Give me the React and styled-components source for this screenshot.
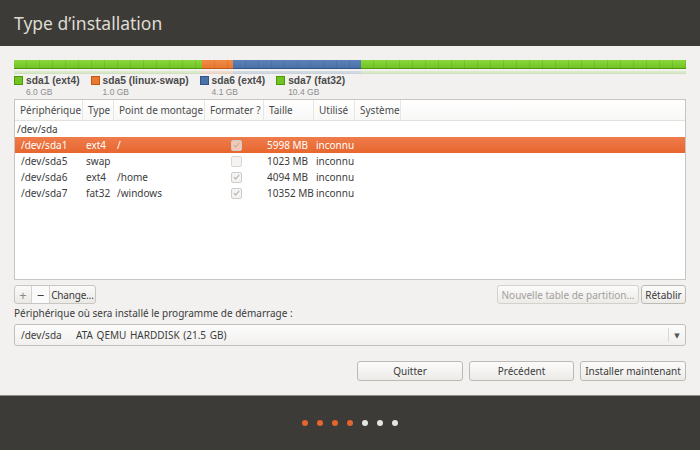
import styled, { createGlobalStyle } from 'styled-components';

const Global = createGlobalStyle`
  html, body { margin: 0; padding: 0; }
  body {
    font-family: 'Noto Sans', 'DejaVu Sans', sans-serif;
    background: #f2f1f0;
    color: #3c3c3c;
  }
`

const Page = styled.div`
  width: 700px;
  height: 450px;
  display: flex;
  flex-direction: column;
  overflow: hidden;
`

const Header = styled.div`
  height: 46px;
  background: #3c3b37;
  color: #dfdbd2;
  font-size: 17.5px;
  display: flex;
  align-items: center;
  padding-left: 14px;
  flex-shrink: 0;
`

const Main = styled.div`
  flex: 1;
  padding: 14px 14px 0;
  display: flex;
  flex-direction: column;
`

const Bar = styled.div`
  display: flex;
  height: 9px;
`

const Reflection = styled(Bar)`
  height: 3px;
  margin-top: 2px;
  opacity: 0.2;
`

const Segment = styled.div`
  flex: ${p => p.$size};
  background:
    repeating-linear-gradient(90deg, transparent 0 12px, rgba(0,0,0,0.08) 12px 13px),
    linear-gradient(${p => p.$light}, ${p => p.$color});
  border-bottom: 1px solid ${p => p.$dark};
  box-sizing: border-box;
`

const Legend = styled.div`
  display: flex;
  gap: 11px;
  margin-top: 1px;
  font-family: 'Liberation Sans', Arial, sans-serif;
`

const LegendItem = styled.div`
  display: grid;
  grid-template-columns: 12px auto;
  align-items: center;
`

const Swatch = styled.div`
  width: 9px;
  height: 9px;
  background: ${p => p.$color};
  border: 1px solid ${p => p.$dark};
  box-sizing: border-box;
`

const LegendName = styled.div`
  font-size: 10.25px;
  font-weight: bold;
  color: #4a4a4a;
  line-height: 11px;
`

const LegendSize = styled.div`
  grid-column: 2;
  margin-top: 1px;
  font-size: 8.5px;
  color: #8c8c8c;
  line-height: 10px;
`

const Table = styled.div`
  margin-top: 2px;
  height: 181px;
  background: #fff;
  border: 1px solid #c8c5c1;
  box-sizing: border-box;
  display: flex;
  flex-direction: column;
`

const Row = styled.div`
  display: grid;
  grid-template-columns: 68px 31px 91px 59px 50px 41px 46px 1fr;
  height: ${p => (p.$head ? 20 : 16)}px;
  flex-shrink: 0;
  align-items: center;
  font-size: 10px;
  color: ${p => (p.$selected ? '#fff' : '#3c3c3c')};
  background: ${p => (p.$selected ? 'linear-gradient(#ee7c4b, #e8662e)' : 'transparent')};
`

const HeadRow = styled(Row)`
  background: linear-gradient(#ffffff, #f8f8f7);
  border-bottom: 1px solid #e3e1de;
  color: #4a4a4a;
`

const HeadCell = styled.div`
  padding-left: 5px;
  height: 100%;
  display: flex;
  align-items: center;
  border-right: 1px solid #e8e6e3;
  white-space: nowrap;
  overflow: hidden;
  &:last-child { border-right: none; }
`

const Cell = styled.div`
  padding-left: ${p => p.$indent ?? 3}px;
  white-space: nowrap;
  overflow: hidden;
  ${p => p.$center && 'display: flex; justify-content: center;'}
`

const Check = styled.div`
  width: 9px;
  height: 9px;
  border: 1px solid ${p => (p.$on ? '#cfcdca' : '#d8d6d3')};
  border-radius: 2px;
  background: ${p => (p.$sel ? '#f4c7b2' : '#f4f3f2')};
  display: flex;
  align-items: center;
  justify-content: center;
`

const Toolbar = styled.div`
  display: flex;
  margin-top: 5px;
  height: 19px;
`

const Group = styled.div`
  display: flex;
  border: 1px solid #c9c5c0;
  border-radius: 3px;
  overflow: hidden;
  background: linear-gradient(#fafaf9, #ebe9e6);
`

const GroupButton = styled.div`
  display: flex;
  align-items: center;
  justify-content: center;
  width: ${p => p.$w}px;
  font-size: ${p => p.$big ? 13 : 10}px;
  color: ${p => p.$dim ? '#8a8a8a' : '#3c3c3c'};
  border-right: 1px solid #d6d3cf;
  background: ${p => p.$white ? '#fafafa' : 'transparent'};
  letter-spacing: ${p => p.$tight ? '-0.2px' : '0'};
  &:last-child { border-right: none; }
`

const Spacer = styled.div`flex: 1;`

const Button = styled.div`
  height: ${p => p.$h || 19}px;
  width: ${p => (p.$w ? p.$w + 'px' : 'auto')};
  margin-left: ${p => p.$ml || 0}px;
  box-sizing: border-box;
  display: flex;
  align-items: center;
  justify-content: center;
  border: 1px solid ${p => (p.$disabled ? '#d4d1cd' : '#bdb9b4')};
  border-radius: 3px;
  background: linear-gradient(#fbfbfa, #ecebe8);
  font-size: 10px;
  color: ${p => (p.$disabled ? '#a3a09c' : '#3c3c3c')};
  white-space: nowrap;
`

const Label = styled.div`
  font-size: 10px;
  color: #3c3c3c;
  margin-top: 2px;
  height: 14px;
  line-height: 14px;
`

const Combo = styled.div`
  margin-top: 4px;
  height: 22px;
  border: 1px solid #c3c0bb;
  border-radius: 3px;
  background: linear-gradient(#fcfcfc, #f1f0ee);
  display: flex;
  align-items: center;
  font-size: 10px;
  box-sizing: border-box;
`

const ComboText = styled.div`
  flex: 1;
  padding-left: 6px;
  word-spacing: 1px;
`

const ComboArrow = styled.div`
  width: 16px;
  height: 14px;
  border-left: 1px solid #dad8d4;
  display: flex;
  align-items: center;
  justify-content: center;
  font-size: 7px;
  color: #555;
`

const Actions = styled.div`
  display: flex;
  justify-content: flex-end;
  gap: 6px;
  margin-top: 15px;
`

const Footer = styled.div`
  height: 54px;
  flex-shrink: 0;
  background: #3c3b37;
  border-top: 1px solid #8f8b85;
  display: flex;
  align-items: center;
  justify-content: center;
  gap: 9px;
`

const Dot = styled.div`
  width: 6px;
  height: 6px;
  border-radius: 50%;
  background: ${p => (p.$done ? '#e5652e' : '#e6e5e3')};
`

const parts = [
  { name: 'sda1 (ext4)', size: '6.0 GB', gb: 6.0, color: '#72c425', light: '#8ad83d', dark: '#4e9a06' },
  { name: 'sda5 (linux-swap)', size: '1.0 GB', gb: 1.0, color: '#e9782f', light: '#f08a47', dark: '#c25a16' },
  { name: 'sda6 (ext4)', size: '4.1 GB', gb: 4.1, color: '#4a72a8', light: '#5b82b8', dark: '#2f5689' },
  { name: 'sda7 (fat32)', size: '10.4 GB', gb: 10.4, color: '#72c425', light: '#8ad83d', dark: '#4e9a06' },
]

const rows = [
  { dev: '/dev/sda1', type: 'ext4', mount: '/', fmt: true, size: '5998 MB', selected: true },
  { dev: '/dev/sda5', type: 'swap', mount: '', fmt: false, size: '1023 MB' },
  { dev: '/dev/sda6', type: 'ext4', mount: '/home', fmt: true, size: '4094 MB' },
  { dev: '/dev/sda7', type: 'fat32', mount: '/windows', fmt: true, size: '10352 MB' },
]

const Tick = ({ color }) => (
  <svg width="7" height="6" viewBox="0 0 7 6">
    <path d="M0.8 3.2 L2.7 5 L6.2 0.8" fill="none" stroke={color} strokeWidth="1.1" />
  </svg>
)

export default function App() {
  return (
    <Page>
      <Global />
      <Header>Type d’installation</Header>
      <Main>
        <Bar>
          {parts.map(p => (
            <Segment key={p.name} $size={p.gb} $color={p.color} $light={p.light} $dark={p.dark} />
          ))}
        </Bar>
        <Reflection>
          {parts.map(p => (
            <Segment key={p.name} $size={p.gb} $color={p.color} $light={p.light} $dark={p.dark} />
          ))}
        </Reflection>
        <Legend>
          {parts.map(p => (
            <LegendItem key={p.name}>
              <Swatch $color={p.color} $dark={p.dark} />
              <LegendName>{p.name}</LegendName>
              <LegendSize>{p.size}</LegendSize>
            </LegendItem>
          ))}
        </Legend>
        <Table>
          <HeadRow $head>
            <HeadCell>Périphérique</HeadCell>
            <HeadCell>Type</HeadCell>
            <HeadCell>Point de montage</HeadCell>
            <HeadCell>Formater ?</HeadCell>
            <HeadCell>Taille</HeadCell>
            <HeadCell>Utilisé</HeadCell>
            <HeadCell>Système</HeadCell>
            <HeadCell />
          </HeadRow>
          <Row>
            <Cell $indent={2}>/dev/sda</Cell>
          </Row>
          {rows.map(r => (
            <Row key={r.dev} $selected={r.selected}>
              <Cell $indent={6}>{r.dev}</Cell>
              <Cell>{r.type}</Cell>
              <Cell>{r.mount}</Cell>
              <Cell $center>
                <Check $on={r.fmt} $sel={r.selected}>
                  {r.fmt && <Tick color={r.selected ? '#b9b4b0' : '#b3b0ac'} />}
                </Check>
              </Cell>
              <Cell>{r.size}</Cell>
              <Cell $indent={2}>inconnu</Cell>
              <Cell />
              <Cell />
            </Row>
          ))}
        </Table>
        <Toolbar>
          <Group>
            <GroupButton $w={16} $big $dim>+</GroupButton>
            <GroupButton $w={17} $big $white>−</GroupButton>
            <GroupButton $w={45} $tight>Change…</GroupButton>
          </Group>
          <Spacer />
          <Button $disabled $w={142}>Nouvelle table de partition…</Button>
          <Button $w={45} $ml={2}>Rétablir</Button>
        </Toolbar>
        <Label>Périphérique où sera installé le programme de démarrage :</Label>
        <Combo>
          <ComboText>/dev/sda&nbsp;&nbsp;&nbsp;&nbsp;ATA QEMU HARDDISK (21.5 GB)</ComboText>
          <ComboArrow>▼</ComboArrow>
        </Combo>
        <Actions>
          <Button $w={106} $h={20}>Quitter</Button>
          <Button $w={105} $h={20}>Précédent</Button>
          <Button $w={106} $h={20}>Installer maintenant</Button>
        </Actions>
      </Main>
      <Footer>
        {[1, 1, 1, 1, 0, 0, 0].map((d, i) => (
          <Dot key={i} $done={d} />
        ))}
      </Footer>
    </Page>
  )
}
